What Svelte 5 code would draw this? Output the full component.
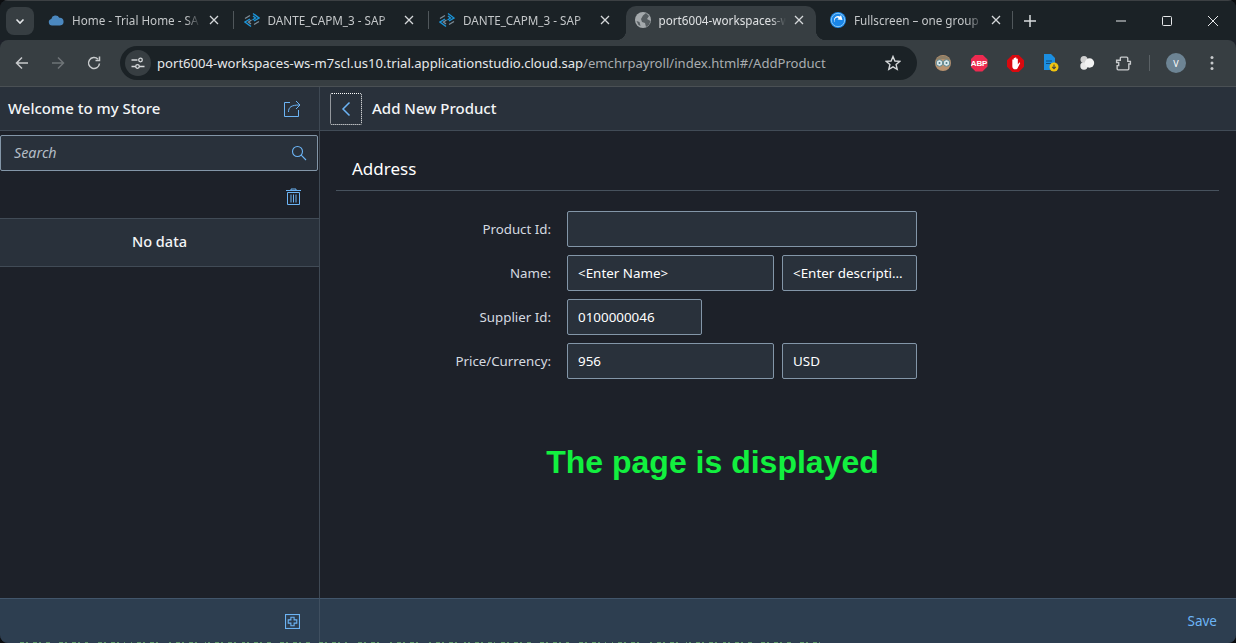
<script>
  const tabs = [
    { title: 'Home - Trial Home - SA', icon: 'cloud' },
    { title: 'DANTE_CAPM_3 - SAP', icon: 'bas' },
    { title: 'DANTE_CAPM_3 - SAP', icon: 'bas' },
    { title: 'port6004-workspaces-w', icon: 'globe', active: true },
    { title: 'Fullscreen – one group', icon: 'swirl' }
  ];
  const rows = [
    { label: 'Product Id:', fields: [{ value: '', cls: 'full' }] },
    { label: 'Name:', fields: [{ value: '<Enter Name>', cls: 'wide' }, { value: '<Enter descripti...', cls: 'narrow' }] },
    { label: 'Supplier Id:', fields: [{ value: '0100000046', cls: 'narrow' }] },
    { label: 'Price/Currency:', fields: [{ value: '956', cls: 'wide' }, { value: 'USD', cls: 'narrow' }] }
  ];
</script>

<div class="window">
  <div class="tabstrip">
    <button class="tab-menu" aria-label="Tab search">
      <svg width="12" height="12" viewBox="0 0 12 12"><path d="M2.5 4.5 6 8l3.5-3.5" fill="none" stroke="#e3e6e8" stroke-width="1.6"/></svg>
    </button>
    <div class="tabs">
      {#each tabs as t, i}
        <div class="tab" class:active={t.active} class:sep={i < 3 && !t.active && !tabs[i + 1].active}>
          <span class="fav">
            {#if t.icon === 'cloud'}
              <svg width="16" height="16" viewBox="0 0 16 16"><path d="M4 13.500a3.300 3.300 0 0 1-.7-6.500 4.300 4.300 0 0 1 8-1.300 3.900 3.900 0 0 1 .7 7.800z" fill="#4b88bf"/></svg>
            {:else if t.icon === 'bas'}
              <svg width="16" height="16" viewBox="0 0 16 16" fill="none" stroke-width="1.400"><path d="M9 1.500 15 6l-5 3" stroke="#1c94d8"/><path d="M9 4l2.500 2-3 2" stroke="#1c94d8"/><path d="M7 14.500 1 10l5-3" stroke="#1c94d8"/><path d="M7 12 4.500 10l3-2" stroke="#7c8b97"/><path d="M1 6.500l5-3M15 9.500l-5 3" stroke="#7c8b97"/></svg>
            {:else if t.icon === 'globe'}
              <svg width="16" height="16" viewBox="0 0 16 16"><circle cx="8" cy="8" r="8" fill="#a4a9ac"/><path d="M8 3.500l3-2.500 3 3-2 3 3.500 2-1.500 4-3 2-1-4-3-1-1-3z" fill="#555c60"/><path d="M1.500 9l3 1 1 4-2-1z" fill="#555c60"/></svg>
            {:else}
              <svg width="16" height="16" viewBox="0 0 16 16"><circle cx="8" cy="8" r="8" fill="#1a86e8"/><circle cx="8" cy="8" r="6.700" fill="none" stroke="#8fcdf8" stroke-width=".9"/><path d="M4 9.500A4.300 4.300 0 0 1 10 4.500L11 3l1.500 5-5-.5 1.200-1.500A2.800 2.800 0 0 0 6 11z" fill="#fff"/></svg>
            {/if}
          </span>
          <span class="tab-title">{t.title}</span>
          <svg class="close" width="10" height="10" viewBox="0 0 10 10"><path d="M1 1l8 8M9 1 1 9" stroke="#d5d8da" stroke-width="1.300"/></svg>
        </div>
      {/each}
    </div>
    <span class="strip-sep"></span>
    <svg class="plus" width="12" height="12" viewBox="0 0 12 12"><path d="M6 0v12M0 6h12" stroke="#d9dcde" stroke-width="1.500"/></svg>
    <div class="win-ctrls">
      <span class="ctl"><svg width="12" height="12" viewBox="0 0 12 12"><path d="M1 6h10" stroke="#e6e8ea"/></svg></span>
      <span class="ctl"><svg width="12" height="12" viewBox="0 0 12 12"><rect x="1.500" y="1.500" width="9" height="9" rx="1" fill="none" stroke="#e6e8ea"/></svg></span>
      <span class="ctl"><svg width="12" height="12" viewBox="0 0 12 12"><path d="M1 1l10 10M11 1 1 11" stroke="#e6e8ea"/></svg></span>
    </div>
  </div>

  <div class="toolbar">
    <span class="tb"><svg width="16" height="16" viewBox="0 0 16 16" fill="none" stroke="#c7cacc" stroke-width="1.500"><path d="M14 8H2.500M8 2.500 2.500 8 8 13.500"/></svg></span>
    <span class="tb"><svg width="16" height="16" viewBox="0 0 16 16" fill="none" stroke="#6e7477" stroke-width="1.500"><path d="M2 8h11.500M8 2.500 13.500 8 8 13.500"/></svg></span>
    <span class="tb"><svg width="16" height="16" viewBox="0 0 16 16" fill="none" stroke="#c7cacc" stroke-width="1.500"><path d="M13.500 8.500A5.500 5.500 0 1 1 12 4.200"/><path d="M13.500 1.500v4h-4" /></svg></span>
    <div class="omnibox">
      <span class="chip"><svg width="14" height="14" viewBox="0 0 14 14" fill="none" stroke="#d5d8da" stroke-width="1.300"><path d="M0.500 4h6M0.500 10.500h4M8 10.500h5.500"/><circle cx="9.500" cy="4" r="1.800"/><circle cx="6.500" cy="10.500" r="1.800"/></svg></span>
      <span class="url"><span class="host">port6004-workspaces-ws-m7scl.us10.trial.applicationstudio.cloud.sap</span><span class="path">/emchrpayroll/index.html#/AddProduct</span></span>
      <svg class="star" width="16" height="16" viewBox="0 0 16 16"><path d="M8 1.500 9.900 6l4.800.4-3.600 3.200 1.100 4.700L8 11.800l-4.200 2.500 1.100-4.700L1.300 6.400 6.100 6z" fill="none" stroke="#d5d8da" stroke-width="1.400"/></svg>
    </div>
    <div class="exts">
      <span class="tb"><svg width="18" height="18" viewBox="0 0 18 18"><circle cx="9" cy="9" r="8" fill="#b8926f"/><path d="M2 6A8 8 0 0 1 16 6L9 5z" fill="#8f8068"/><circle cx="5.500" cy="9" r="3.300" fill="#dbe9ec" stroke="#5f8790"/><circle cx="12.500" cy="9" r="3.300" fill="#dbe9ec" stroke="#5f8790"/><circle cx="5.500" cy="9" r="1" fill="#4c7a86"/><circle cx="12.500" cy="9" r="1" fill="#4c7a86"/></svg></span>
      <span class="tb"><span class="abp">ABP</span></span>
      <span class="tb"><svg width="17" height="17" viewBox="0 0 16 16"><path d="M5 0h6l5 5v6l-5 5H5l-5-5V5z" fill="#d9090f"/><path d="M5 7V4.500a.7.700 0 0 1 1.300 0V7 3a.7.700 0 0 1 1.300 0v4-4.500a.7.700 0 0 1 1.300 0V7 3.800a.7.700 0 0 1 1.300 0V9l1-1.500c.6-.7 1.500-.2 1 .6l-1.800 3.400C10 13 9 13.500 8 13.500c-2 0-3-1.500-3-3z" fill="#fff"/></svg></span>
      <span class="tb"><svg width="16" height="18" viewBox="0 0 16 18"><path d="M1 0h7l4 4v12H1z" fill="#1b8ee0"/><path d="M3 7h6M3 9.500h5" stroke="#0d4d80"/><circle cx="11" cy="13" r="4.500" fill="#f1c40f"/><path d="M11 10.500v4M9.200 12.800 11 14.800l1.800-2" fill="none" stroke="#444" stroke-width="1.100"/></svg></span>
      <span class="tb"><svg width="16" height="16" viewBox="0 0 16 16"><circle cx="5" cy="4.500" r="3.500" fill="#cfcfcf"/><circle cx="5" cy="11" r="3.700" fill="#e8e8e8"/><circle cx="10.500" cy="8" r="4.700" fill="#f2f2f2"/></svg></span>
      <span class="tb"><svg width="17" height="17" viewBox="0 0 16 16"><path d="M1.500 5H5V3.200a1 1 0 0 1 1-1.200h5a1 1 0 0 1 1 1v3h2.500v2.500H13V13a1 1 0 0 1-1 1H3a1 1 0 0 1-1-1v-3h1.500V7H1.500z" fill="none" stroke="#c7cacc" stroke-width="1.300"/></svg></span>
    </div>
    <span class="tool-sep"></span>
    <span class="avatar">V</span>
    <span class="tb"><svg width="4" height="16" viewBox="0 0 4 16" fill="#c7cacc"><circle cx="2" cy="2.500" r="1.500"/><circle cx="2" cy="8" r="1.500"/><circle cx="2" cy="13.500" r="1.500"/></svg></span>
  </div>

  <div class="app">
    <aside class="master">
      <header class="bar master-head">
        <span class="title">Welcome to my Store</span>
        <svg class="ico" width="17" height="17" viewBox="0 0 17 17" fill="none" stroke="#6cb4f5" stroke-width="1"><path d="M6 2.500H.5v14h14V10"/><path d="M4.500 12c0-5 3-7 11-7M12 1l4 4-4 4"/></svg>
      </header>
      <div class="search">
        <span class="placeholder">Search</span>
        <svg width="16" height="16" viewBox="0 0 16 16" fill="none" stroke="#6cb4f5" stroke-width="1.100"><circle cx="6.500" cy="6.500" r="5"/><path d="M10.200 10.200 15 15"/></svg>
      </div>
      <div class="list-tools">
        <svg width="15" height="17" viewBox="0 0 15 17" fill="none" stroke="#6cb4f5" stroke-width="1"><path d="M0 2.500h15M5 2.500V1h5v1.500"/><path d="M1.500 4.500h12V16.500h-12z"/><path d="M5 6.500v8M7.500 6.500v8M10 6.500v8"/></svg>
      </div>
      <div class="no-data">No data</div>
    </aside>
    <main class="detail">
      <header class="bar detail-head">
        <button class="back" aria-label="Back"><svg width="10" height="16" viewBox="0 0 10 16" fill="none" stroke="#6cb4f5" stroke-width="1.500"><path d="M8.500 1.500 2 8l6.500 6.500"/></svg></button>
        <span class="title">Add New Product</span>
      </header>
      <div class="content">
        <section class="form">
          <h2>Address</h2>
          <div class="rows">
            {#each rows as r}
              <div class="row">
                <label for={r.label}>{r.label}</label>
                <div class="fields">
                  {#each r.fields as f, i}
                    <input id={i === 0 ? r.label : undefined} class={f.cls} value={f.value} readonly />
                  {/each}
                </div>
              </div>
            {/each}
          </div>
        </section>
        <p class="status">The page is displayed</p>
      </div>
    </main>
    <footer class="foot foot-l">
      <svg width="15" height="15" viewBox="0 0 14 14" fill="none" stroke="#6cb4f5" stroke-width="1"><rect x=".5" y=".5" width="13" height="13"/><path d="M5.500 3h3v2.500H11v3H8.500V11h-3V8.500H3v-3h2.500z"/></svg>
    </footer>
    <footer class="foot foot-r"><span class="save">Save</span></footer>
  </div>
  <div class="cut-strip"></div>
</div>

<style>
  :global(body) { margin: 0; background: #0c0e10; overflow: hidden; }
  .window { width: 1236px; height: 643px; display: flex; flex-direction: column; background: #1d2129; border-radius: 8px; overflow: hidden; font-family: "Noto Sans", sans-serif; position: relative; }

  .tabstrip { height: 40px; flex: none; display: flex; align-items: center; background: #1b2226; box-sizing: border-box; border-top: 1px solid #3c4043; }
  .tab-menu { width: 28px; height: 28px; margin: 0 4px 0 6px; padding: 0; border: 0; border-radius: 8px; background: #373e42; display: flex; align-items: center; justify-content: center; flex: none; }
  .tabs { display: flex; align-self: stretch; padding-top: 5px; flex: none; }
  .tab { width: 195.500px; box-sizing: border-box; display: flex; align-items: center; padding: 0 15px 6px 10px; color: #c4c7c9; font-size: 11.700px; position: relative; border-radius: 10px 10px 0 0; }
  .tab.sep::after { content: ""; position: absolute; right: 0; top: 5px; height: 18px; width: 1px; background: #50575b; }
  .tab.active { background: #373e42; color: #dfe1e3; width: 190px; margin: 0 4px 0 1.500px; padding: 0 12px 6px 8.500px; }
  .tab.active::before, .tab.active::after { content: ""; position: absolute; bottom: 0; width: 10px; height: 10px; }
  .tab.active::before { left: -10px; background: radial-gradient(circle at 0 0, transparent 10px, #373e42 10.500px); }
  .tab.active::after { right: -10px; background: radial-gradient(circle at 100% 0, transparent 10px, #373e42 10.500px); }
  .fav { width: 16px; height: 16px; flex: none; margin-right: 8px; display: flex; }
  .tab-title { flex: 1; min-width: 0; white-space: nowrap; -webkit-mask-image: linear-gradient(90deg, #000 88%, transparent 100%); mask-image: linear-gradient(90deg, #000 88%, transparent 100%); }
  .close { flex: none; margin-left: 8px; }
  .strip-sep { width: 1px; height: 18px; background: #50575b; margin-left: -4px; margin-bottom: 1px; }
  .plus { margin-left: 11px; }
  .win-ctrls { margin-left: auto; display: flex; }
  .ctl { width: 46px; height: 30px; display: flex; align-items: center; justify-content: center; }

  .toolbar { height: 47px; flex: none; display: flex; align-items: center; background: #373e42; padding-left: 4px; box-sizing: border-box; border-bottom: 1px solid #4a5054; border-radius: 8px 8px 0 0; }
  .tb { width: 36px; height: 36px; display: flex; align-items: center; justify-content: center; flex: none; }
  .omnibox { width: 797px; height: 34px; margin-left: 8px; flex: none; border-radius: 17px; background: #1b2226; display: flex; align-items: center; padding: 0 16px 0 5px; box-sizing: border-box; }
  .chip { width: 26px; height: 26px; border-radius: 50%; background: #373e42; display: flex; align-items: center; justify-content: center; flex: none; }
  .url { margin-left: 6px; font-size: 13.100px; white-space: nowrap; flex: 1; }
  .host { color: #e6e8ea; }
  .path { color: #a9adb0; }
  .star { flex: none; }
  .exts { display: flex; margin-left: 8px; }
  .abp { width: 17px; height: 17px; background: #ee2a50; color: #fff; font: 700 8px "Liberation Sans", sans-serif; letter-spacing: -.2px; display: flex; align-items: center; justify-content: center; clip-path: polygon(30% 0, 70% 0, 100% 30%, 100% 70%, 70% 100%, 30% 100%, 0 70%, 0 30%); }
  .tool-sep { width: 1px; height: 16px; background: #5a6165; margin: 0 16px 0 8px; flex: none; }
  .avatar { width: 20px; height: 20px; border-radius: 50%; background: #6d8494; color: #fff; font-size: 9px; display: flex; align-items: center; justify-content: center; flex: none; margin-right: 8px; }

  .app { flex: 1; min-height: 0; display: grid; grid-template-columns: 320px 1fr; grid-template-rows: 1fr 44px; background: #1d2129; color: #fff; }
  .bar { height: 44px; box-sizing: border-box; background: #29313b; border-bottom: 1px solid #414b56; display: flex; align-items: center; padding-bottom: 2px; }
  .title { font-size: 15px; font-weight: 500; color: #f3f5f7; }
  .master { border-right: 1px solid #3f4954; display: flex; flex-direction: column; min-height: 0; }
  .master-head { justify-content: space-between; padding-left: 8px; padding-right: 18px; }
  .ico { flex: none; margin-top: 2px; }
  .search { height: 36px; margin: 4px 1px 0 0; box-sizing: border-box; border: 1px solid #8396a8; border-radius: 2px; background: #29313b; display: flex; align-items: center; justify-content: space-between; padding: 0 10px 0 13px; }
  .placeholder { font-style: italic; font-size: 14.300px; color: #b4bdc6; margin-bottom: 2px; }
  .list-tools { height: 47px; box-sizing: border-box; display: flex; align-items: center; justify-content: flex-end; padding: 3px 18px 0 0; }
  .no-data { height: 49px; box-sizing: border-box; background: #29313b; border-top: 1px solid #414b56; border-bottom: 1px solid #414b56; display: flex; align-items: center; justify-content: center; padding-bottom: 3px; font-size: 14.500px; font-weight: 500; color: #f3f5f7; }

  .detail { min-width: 0; display: flex; flex-direction: column; min-height: 0; }
  .detail-head { padding-left: 10px; gap: 10px; padding-bottom: 0; }
  .detail-head .title { margin-bottom: 2px; }
  .back { width: 32px; height: 32px; background: transparent; border: 1px dotted #fff; border-radius: 2px; padding: 0; display: flex; align-items: center; justify-content: center; }
  .content { padding: 0 17px 0 16px; flex: 1; }
  .form h2 { margin: 0; height: 60px; box-sizing: border-box; padding: 26px 0 0 16px; border-bottom: 1px solid #47525d; font-size: 17px; font-weight: 400; line-height: 24px; color: #fff; }
  .rows { display: flex; flex-direction: column; gap: 8px; margin-top: 20px; }
  .row { display: flex; align-items: center; }
  label { width: 215px; text-align: right; font-size: 13.300px; color: #d5dae0; flex: none; }
  .fields { margin-left: 16px; width: 350px; display: flex; gap: 8px; }
  input { height: 36px; box-sizing: border-box; border: 1px solid #8396a8; border-radius: 2px; background: #29313b; color: #fff; font: 13.400px "Noto Sans", sans-serif; padding: 0 10px; outline: none; min-width: 0; }
  input.full { width: 350px; }
  input.wide { width: 207px; }
  input.narrow { width: 135px; }
  .status { margin: 64px 0 0; padding-right: 130px; text-align: center; color: #12f03f; font: 700 32px "Liberation Sans", sans-serif; line-height: 38px; }

  .foot { background: #2d3e50; border-top: 1px solid #42566b; display: flex; align-items: center; justify-content: flex-end; box-sizing: border-box; padding-top: 1px; }
  .foot-l { border-right: 1px solid #3f4f60; padding-right: 19px; }
  .foot-r { padding-right: 19px; }
  .save { color: #6cb4f5; font-size: 13.500px; }
  .cut-strip { height: 1px; flex: none; background:
    repeating-linear-gradient(90deg, transparent 0 31px, #2d3e50 31px 37px) 20px 0 / 800px 1px no-repeat,
    repeating-linear-gradient(90deg, #5f9a6a 0 4px, #2d3e50 4px 6px, #5f9a6a 6px 8px, #2d3e50 8px 13px) 20px 0 / 800px 1px no-repeat,
    #2d3e50; }
</style>
